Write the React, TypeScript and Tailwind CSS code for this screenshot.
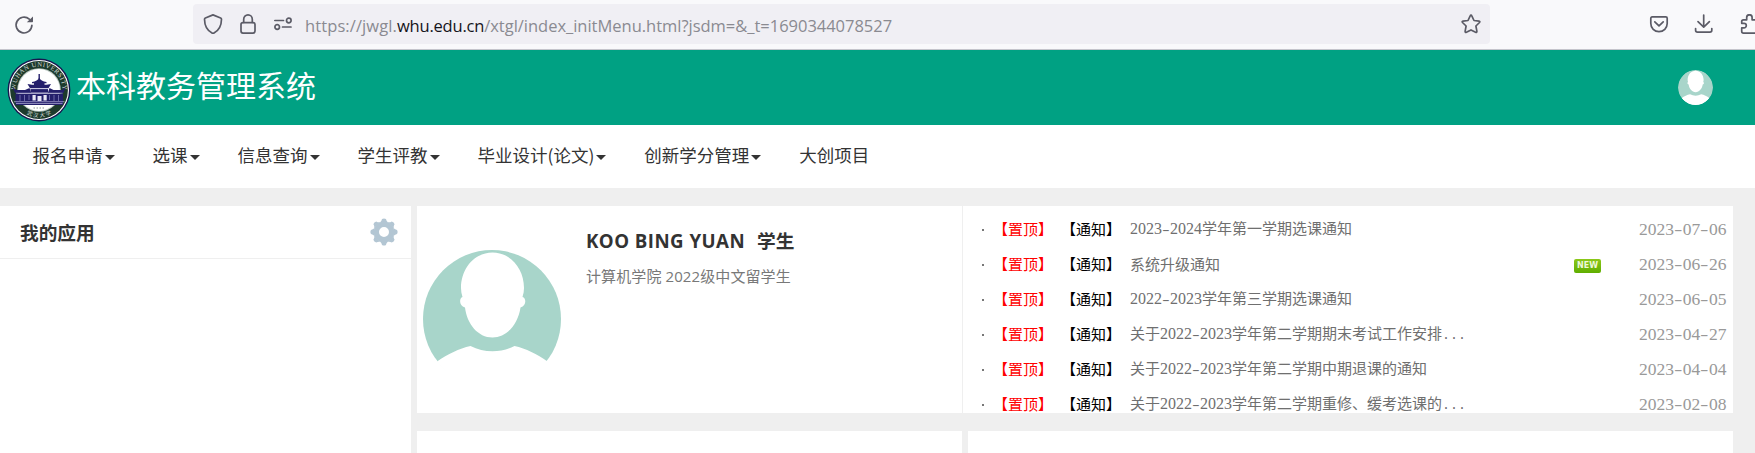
import React from "react";

const LATIN = "font-['Open_Sans','Noto_Sans_CJK_SC',sans-serif]";
const CJK = "font-['Noto_Sans_CJK_SC',sans-serif]";

const menus = [
  { label: "报名申请", caret: true },
  { label: "选课", caret: true },
  { label: "信息查询", caret: true },
  { label: "学生评教", caret: true },
  { label: "毕业设计(论文)", caret: true },
  { label: "创新学分管理", caret: true },
  { label: "大创项目", caret: false },
];

const notices = [
  { title: "2023-2024学年第一学期选课通知", date: "2023-07-06", fresh: false },
  { title: "系统升级通知", date: "2023-06-26", fresh: true },
  { title: "2022-2023学年第三学期选课通知", date: "2023-06-05", fresh: false },
  { title: "关于2022-2023学年第二学期期末考试工作安排...", date: "2023-04-27", fresh: false },
  { title: "关于2022-2023学年第二学期中期退课的通知", date: "2023-04-04", fresh: false },
  { title: "关于2022-2023学年第二学期重修、缓考选课的...", date: "2023-02-08", fresh: false },
];

const stroke = {
  fill: "none",
  stroke: "#5b5b66",
  strokeWidth: 1.7,
  strokeLinecap: "round" as const,
  strokeLinejoin: "round" as const,
};

/** Half-width characters on a fixed pitch: serif digits, monospaced hyphens and dots. */
function Pitch({ text, digit, mark }: { text: string; digit: string; mark: string }) {
  const parts = text.match(/\d+|-|\.+|[^\d.-]+/g) ?? [];
  return (
    <>
      {parts.map((p, i) => {
        if (/^\d/.test(p)) return <span key={i} className={digit}>{p}</span>;
        if (p === "-") return <span key={i} className={`${mark} inline-block scale-x-160`}>{p}</span>;
        if (/^\./.test(p)) return <span key={i} className={mark}>{p}</span>;
        return <span key={i}>{p}</span>;
      })}
    </>
  );
}

function Avatar({ className }: { className: string }) {
  return (
    <svg viewBox="0 0 138 138" className={className}>
      <circle cx="69" cy="69" r="69" fill="#a8d5ca" />
      <path
        fill="#fff"
        d="M69.500 2.500C87 2.500 101 18 101 38C101 41 100.500 44 99.500 47C103.500 48 103.500 56 97.500 57.500C95 74 84 87.500 69.500 87.500C55 87.500 44 74 42 57.500C36 56 36 48 39.500 47C38.500 44 38 41 38 38C38 18 52 2.500 69.500 2.500Z"
      />
      <path
        fill="#fff"
        d="M14 111.500C25 104 36 98.500 47.500 96C61 103 78 103 91.500 96C103 98.500 114 104 124.500 111.500A69 69 0 0 1 14 111.500Z"
      />
    </svg>
  );
}

function Crest() {
  return (
    <svg viewBox="0 0 64 64" className="h-16 w-16 shrink-0">
      <defs>
        <path id="crest-top" d="M9.600 39.500A23.600 23.600 0 1 1 54.400 39.500" />
        <path id="crest-bottom" d="M11 49.500A27.500 27.500 0 0 0 53 49.500" />
      </defs>
      <circle cx="32" cy="32" r="31.400" fill="#16174f" />
      <circle cx="32" cy="32" r="30" fill="#fff" />
      <circle cx="32" cy="32" r="28.900" fill="#1d3a2c" />
      <circle cx="32" cy="32" r="21.800" fill="#b9c6bf" />
      <circle cx="32" cy="32" r="20.900" fill="#fff" />
      <text fill="#d5ddd8" fontSize="6.600" className="font-['Liberation_Serif',serif]">
        <textPath href="#crest-top" startOffset="50%" textAnchor="middle" textLength="74">
          WUHAN UNIVERSITY
        </textPath>
      </text>
      <text fill="#d5ddd8" fontSize="5.500" className={CJK}>
        <textPath href="#crest-bottom" startOffset="50%" textAnchor="middle" textLength="26">
          武汉大学
        </textPath>
      </text>
      <g fill="#241f6b">
        <path d="M31.500 16h1.400v5h-1.400z" />
        <path d="M32.200 19.500C33 22.300 36 23.500 39.500 24V25.300H25V24C28.500 23.500 31.400 22.300 32.200 19.500Z" />
        <path d="M27 25h10.500v2.300H27z" />
        <path d="M20.500 26L25 26.700H39.500L44 26L41.500 30.200H23Z" />
        <path d="M23.500 31h17.500v3.500h-17.500z" />
        <path d="M5.500 29L9 32H18L22.500 30L24 34.500H41L42.500 30L46.500 32H55L58.500 29L56.500 35H8Z" />
        <path d="M8.500 35.500H56V47H8.500Z" />
      </g>
      <path d="M24 30.700H41M9 35.200H55.500" stroke="#c9c7e6" strokeWidth=".6" />
      <path d="M13 37v6M17.500 37v6M47 37v6M51.500 37v6M22 37v5M42.500 37v5" stroke="#8e8bc4" strokeWidth=".7" />
      <path d="M25.500 37h3.200v5.500h-3.200zM30.500 38h4v5h-4zM36.500 37h3.200v5.500h-3.200z" fill="#e9e8f5" />
      <path d="M7 43.700H57.500M9 45.500H55.500" stroke="#b4b1da" strokeWidth=".7" />
      <path d="M26.500 50H38" stroke="#8b9992" strokeWidth="1" strokeDasharray="1.500 1.500" />
    </svg>
  );
}

function Gear() {
  return (
    <svg viewBox="-14 -14 28 28" className="h-7 w-7">
      <g fill="#b3c6d3">
        {[0, 45, 90, 135, 180, 225, 270, 315].map((a) => (
          <path key={a} transform={`rotate(${a})`} d="M-4.500-9.500C-3.200-10.200-2.400-11.200-2-13Q0-14.200 2-13C2.400-11.200 3.200-10.200 4.500-9.500Z" />
        ))}
      </g>
      <circle r="7.700" fill="none" stroke="#b3c6d3" strokeWidth="5.400" />
    </svg>
  );
}

function BrowserBar() {
  return (
    <div className="flex h-[50px] items-start border-b border-[#c5c5cc] bg-[#f9f9fb]">
      <svg viewBox="0 0 20 20" className="mt-[15px] ml-[14px] h-5 w-5 shrink-0">
        <path {...stroke} d="M17.900 10.300A7.900 7.900 0 1 1 15.300 4.200" />
        <path d="M19 1.600V6.600Q19 7.300 18.300 7.300H12.800Z" fill="#5b5b66" />
      </svg>
      <div className="mt-1 ml-[159px] flex h-10 w-[1297px] shrink-0 items-start rounded bg-[#f0eff4]">
        <svg viewBox="0 0 20 20" className="mt-[10px] ml-[10px] h-5 w-5">
          <path {...stroke} d="M10 .9L17.600 4Q18.500 4.400 18.500 5.300C18.400 11.300 15.800 16.600 11 19Q10 19.500 9 19C4.200 16.600 1.600 11.300 1.500 5.300Q1.500 4.400 2.400 4Z" />
        </svg>
        <svg viewBox="0 0 16 20" className="mt-[10px] ml-[17px] h-5 w-4">
          <rect {...stroke} x="1" y="8.600" width="14" height="10.500" rx="2" />
          <path {...stroke} d="M3.700 8.300V5.200A4.300 4.300 0 0 1 12.300 5.200V8.300" />
        </svg>
        <svg viewBox="0 0 18 14" className="mt-[13px] ml-[18px] h-[14px] w-[18px]">
          <circle {...stroke} cx="14.800" cy="3.500" r="2.300" />
          <circle {...stroke} cx="3.200" cy="10" r="2.300" />
          <path {...stroke} d="M.8 3.500H9.500M8.500 10H17" />
        </svg>
        <div className={`${LATIN} ml-[13px] w-[600px] text-[16.500px] leading-[44px] tracking-[-0.020px] whitespace-nowrap text-[#8a8a91]`}>
          <span className="tracking-[0.100px]">https://jwgl.</span>
          <span className="tracking-[-0.200px] text-[#15141a]">whu.edu.cn</span>/xtgl/index_initMenu.html?jsdm=&amp;_t=1690344078527
        </div>
        <svg viewBox="0 0 20 20" className="mt-[10px] ml-auto mr-[9px] h-5 w-5">
          <path {...stroke} d="M10 1.200Q10.500 1.200 10.800 1.900L13 6.500L18 7.100Q19.400 7.400 18.500 8.500L14.900 12L15.900 17.300Q15.900 18.800 14.600 18.300L10 15.900L5.400 18.300Q4.100 18.800 4.100 17.300L5.100 12L1.500 8.500Q.6 7.400 2 7.100L7 6.500L9.200 1.900Q9.500 1.200 10 1.200Z" />
        </svg>
      </div>
      <svg viewBox="0 0 20 18" className="mt-[15px] ml-[159px] h-[18px] w-5 shrink-0">
        <path {...stroke} d="M3.200 1.900H16.800Q18.200 1.900 18.200 3.300V8.500A8.200 8.200 0 0 1 1.800 8.500V3.300Q1.800 1.900 3.200 1.900Z" />
        <path {...stroke} d="M5.800 6.800L10 10.800L14.200 6.800" />
      </svg>
      <svg viewBox="0 0 20 20" className="mt-[14px] ml-[25px] h-5 w-5 shrink-0">
        <path {...stroke} d="M9.700 1V13M4 7.700L9.700 13.200L15.400 7.700M1.600 14.500V16.300Q1.600 18.200 3.500 18.200H15.900Q17.800 18.200 17.800 16.300V14.500" />
      </svg>
      <div className="ml-[26px] h-[49px] w-[15px] shrink-0 overflow-hidden">
        <svg viewBox="0 0 20 20" className="mt-[14px] h-5 w-5">
          <path {...stroke} d="M3.500 5.800H6.700V3.500A2.700 2.700 0 0 1 12.100 3.500V5.800H18V19.100H3.500Q1.700 19.100 1.700 17.300V13.900H4A2.300 2.300 0 0 0 4 9.300H1.700V7.500Q1.700 5.800 3.500 5.800Z" />
        </svg>
      </div>
    </div>
  );
}

function NoticeRow({ title, date, fresh }: { title: string; date: string; fresh: boolean }) {
  return (
    <li className="flex h-[35px] items-center text-[15px] leading-[22px] whitespace-nowrap">
      <span className="ml-[19px] h-[2px] w-[2px] bg-[#777]" />
      <span className="-mt-px ml-[9px] w-[60px] text-[#f00]">【置顶】</span>
      <span className="-mt-px ml-[8px] w-[60px] text-black">【通知】</span>
      <span className="-mt-px ml-[9px] text-[#6f6f6f]">
        <Pitch
          text={title}
          digit="font-['Liberation_Serif',serif] text-[16px]"
          mark="font-['Liberation_Mono',monospace] text-[13.330px]"
        />
      </span>
      {fresh && (
        <span className="mt-[2px] mr-[38px] ml-auto flex h-[14px] w-[27px] items-center justify-center rounded-[2px] bg-linear-to-b from-[#8cc81a] to-[#5fae00] font-['DejaVu_Sans',sans-serif] text-[8px] leading-none font-bold text-[#eef8d8]">
          NEW
        </span>
      )}
      <span className={`mr-[6px] w-[88px] text-[#999] ${fresh ? "" : "ml-auto"}`}>
        <Pitch
          text={date}
          digit="font-['Liberation_Serif',serif] text-[17.500px]"
          mark="font-['Liberation_Mono',monospace] text-[14.600px]"
        />
      </span>
    </li>
  );
}

export default function App() {
  return (
    <div className={`${CJK} h-[453px] w-[1755px] overflow-hidden bg-[#efefef] text-[#333]`}>
      <BrowserBar />
      <header className="flex h-[75px] items-center bg-[#00a183] pl-[7px]">
        <div className="mt-[5px]">
          <Crest />
        </div>
        <h1 className="-mt-[8px] ml-[5px] text-[30px] leading-none text-white">本科教务管理系统</h1>
        <Avatar className="mr-[42px] ml-auto h-[35px] w-[35px] rounded-full" />
      </header>
      <nav className="flex h-[63px] items-start bg-white pl-[13.500px]">
        {menus.map((m) => (
          <a key={m.label} className="flex items-center px-[19px] text-[17.500px] leading-[60px] whitespace-nowrap">
            {m.label}
            {m.caret && (
              <svg viewBox="0 0 10 5" className="mt-[4px] ml-[2px] h-[5px] w-[10px]">
                <path d="M0 0H10L5 5Z" fill="#333" />
              </svg>
            )}
          </a>
        ))}
      </nav>
      <main className="flex gap-[6px] pt-[18px]">
        <section className="h-[247px] w-[411px] bg-white">
          <div className="flex h-[53px] items-center justify-between border-b border-[#efefef] pr-[13px] pl-5">
            <h2 className="text-[18.700px] font-bold">我的应用</h2>
            <Gear />
          </div>
        </section>
        <div className="w-[1316px]">
          <div className="flex h-[207px] overflow-hidden bg-white">
            <section className="flex w-[545px] items-start">
              <Avatar className="mt-11 ml-[6px] h-[138px] w-[138px]" />
              <div className="mt-[20px] ml-[25px] whitespace-nowrap">
                <h3 className={`${LATIN} text-[18.700px] leading-[30px] font-bold`}>
                  <span className="inline-block w-[171px] tracking-[0.450px]">KOO BING YUAN</span>
                  <span>学生</span>
                </h3>
                <p className={`${LATIN} mt-[8px] text-[15px] leading-6 tracking-[0.100px] text-[#787878]`}>计算机学院 2022级中文留学生</p>
              </div>
            </section>
            <section className="flex-1 border-l border-[#efefef]">
              <ul className="pt-[6px]">
                {notices.map((n) => (
                  <NoticeRow key={n.date} {...n} />
                ))}
              </ul>
            </section>
          </div>
          <div className="mt-[18px] flex h-[22px] gap-[6px]">
            <section className="w-[545px] bg-white" />
            <section className="flex-1 bg-white" />
          </div>
        </div>
      </main>
    </div>
  );
}
